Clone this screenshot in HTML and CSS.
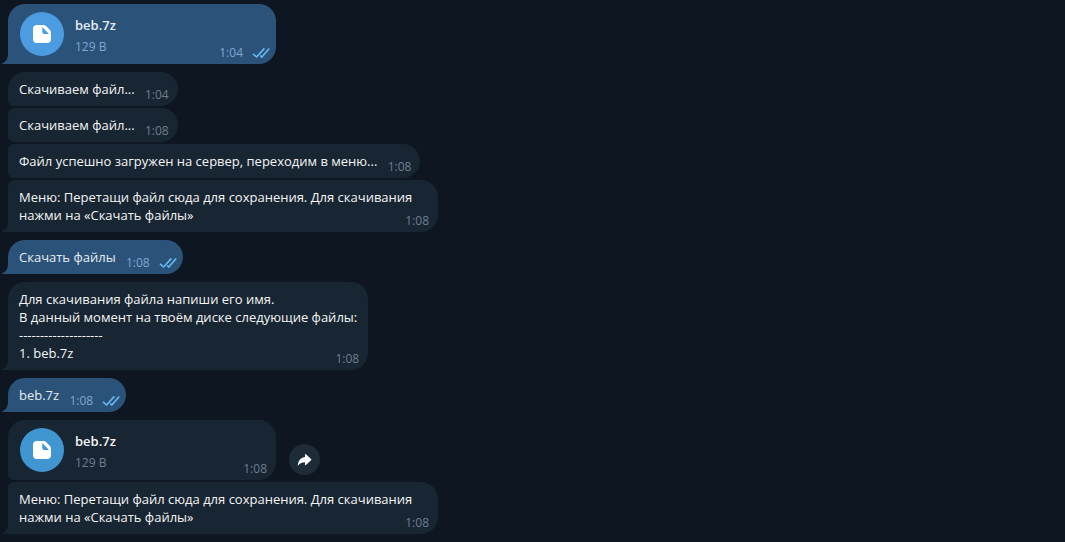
FILE: index.html
```
<!DOCTYPE html>
<html lang="ru">
<head>
<meta charset="utf-8">
<meta name="viewport" content="width=device-width, initial-scale=1">
<title>Чат</title>
<link rel="stylesheet" href="styles.css">
</head>
<body>
<svg class="defs" aria-hidden="true">
  <symbol id="checks" viewBox="0 0 18 12"><path d="M1 6.800 4.600 10 12.400 1.400M8.200 8.400 9.800 10 17.200 1.400" fill="none" stroke="currentColor" stroke-width="1.600"/></symbol>
  <symbol id="file" viewBox="0 0 18 18"><path fill-rule="evenodd" fill="#fff" d="M4 0H10.500Q12 0 13 1L17 5Q18 6 18 7.500V14Q18 18 14 18H4Q0 18 0 14V4Q0 0 4 0ZM9.300 2V7Q9.300 8.900 11.200 8.900H16Z"/></symbol>
  <symbol id="tail" viewBox="0 0 6 10"><path fill="currentColor" d="M6 0V10H0.500Q-.5 9.800 .5 9.300Q6 6.500 6 0Z"/></symbol>
</svg>
<main class="chat">
  <section class="group">
    <article class="bubble own file-bubble tailed">
      <svg class="tail"><use href="#tail"/></svg>
      <div class="file">
        <button class="file-button" aria-label="Открыть beb.7z"><svg class="file-icon"><use href="#file"/></svg></button>
        <div class="file-info"><div class="file-name">beb.7z</div><div class="file-size">129 B</div></div>
      </div>
      <span class="meta"><time>1:04</time><svg class="checks"><use href="#checks"/></svg></span>
    </article>
  </section>
  <section class="group">
    <article class="bubble short first"><p class="text">Скачиваем файл...</p><span class="meta"><time>1:04</time></span></article>
    <article class="bubble short"><p class="text">Скачиваем файл...</p><span class="meta"><time>1:08</time></span></article>
    <article class="bubble short"><p class="text">Файл успешно загружен на сервер, переходим в меню...</p><span class="meta"><time>1:08</time></span></article>
    <article class="bubble tailed">
      <svg class="tail"><use href="#tail"/></svg>
      <p class="text">Меню: Перетащи файл сюда для сохранения. Для скачивания нажми на «Скачать файлы»</p><span class="meta"><time>1:08</time></span>
    </article>
  </section>
  <section class="group">
    <article class="bubble own short first tailed">
      <svg class="tail"><use href="#tail"/></svg>
      <p class="text">Скачать файлы</p><span class="meta"><time>1:08</time><svg class="checks"><use href="#checks"/></svg></span>
    </article>
  </section>
  <section class="group">
    <article class="bubble first tailed">
      <svg class="tail"><use href="#tail"/></svg>
      <p class="text">Для скачивания файла напиши его имя.<br>В данный момент на твоём диске следующие файлы:<br>--------------------<br>1. beb.7z</p><span class="meta"><time>1:08</time></span>
    </article>
  </section>
  <section class="group">
    <article class="bubble own short first tailed">
      <svg class="tail"><use href="#tail"/></svg>
      <p class="text">beb.7z</p><span class="meta"><time>1:08</time><svg class="checks"><use href="#checks"/></svg></span>
    </article>
  </section>
  <section class="group">
    <div class="row">
      <article class="bubble file-bubble first">
        <div class="file">
          <button class="file-button" aria-label="Открыть beb.7z"><svg class="file-icon"><use href="#file"/></svg></button>
          <div class="file-info"><div class="file-name">beb.7z</div><div class="file-size">129 B</div></div>
        </div>
        <span class="meta"><time>1:08</time></span>
      </article>
      <button class="share" aria-label="Переслать"><svg viewBox="0 0 16 14"><path fill="#fff" d="M8.500 1.200Q8.500 0 9.500 .8L15 5.800Q15.800 6.500 15 7.200L9.500 12.200Q8.500 13 8.500 11.800V9.300Q4 9.300 1.300 12.700Q.6 13.300.8 12.300Q2 4.300 8.500 3.800Z"/></svg></button>
    </div>
    <article class="bubble tailed">
      <svg class="tail"><use href="#tail"/></svg>
      <p class="text">Меню: Перетащи файл сюда для сохранения. Для скачивания нажми на «Скачать файлы»</p><span class="meta"><time>1:08</time></span>
    </article>
  </section>
</main>
</body>
</html>
```
FILE: styles.css
```
* { box-sizing: border-box; }

body {
  margin: 0;
  background: #0e1621;
  color: #f5f5f5;
  font: 13px/18px "Open Sans", "Noto Sans", sans-serif;
}

.defs { position: absolute; width: 0; height: 0; }

.chat {
  display: flex;
  flex-direction: column;
  gap: 8px;
  padding: 4px 8px 8px;
}

.group {
  display: flex;
  flex-direction: column;
  align-items: flex-start;
  gap: 2px;
}

.bubble {
  position: relative;
  display: grid;
  max-width: 430px;
  padding: 8px 11px;
  border-radius: 6px 17px 17px 6px;
  background: #182533;
  color: #f5f5f5;
}

.bubble.first, .file-bubble { border-top-left-radius: 17px; }
.bubble.tailed { border-bottom-left-radius: 0; }
.bubble.own { background: #2b5278; color: #e4ecf2; }

.tail {
  position: absolute;
  right: 100%;
  bottom: 0;
  width: 6px;
  height: 10px;
  color: #182533;
}
.own .tail { color: #2b5278; }

.text, .file, .meta { grid-area: 1 / 1; }
.text { margin: 0; }
.short .text { padding-right: 32px; }
.short.own .text { padding-right: 56px; }

.meta {
  display: flex;
  align-items: center;
  align-self: end;
  justify-self: end;
  gap: 9px;
  margin: 0 -2px -5px 0;
  color: #6d7f8f;
  font-size: 12px;
  line-height: 16px;
}
.own .meta { margin-right: -5px; color: #7da8d3; }

.checks { width: 18px; height: 12px; color: #65b9f4; }

.file-bubble { width: 268px; }
.file {
  display: flex;
  align-items: center;
  gap: 11px;
  margin-left: 1px;
}
.file-button {
  display: grid;
  place-items: center;
  width: 44px;
  height: 44px;
  padding: 0;
  border: 0;
  border-radius: 50%;
  background: #4096d1;
}
.own .file-button { background: #4c9ce2; }
.file-icon { width: 18px; height: 18px; }
.file-info { padding-top: 4px; }
.file-name { margin-bottom: 4px; font-weight: 600; }
.file-size { color: #6d7f8f; font-size: 12px; }
.own .file-size { color: #7da8d3; }

.row {
  display: flex;
  align-items: flex-end;
  gap: 13px;
}
.share {
  display: grid;
  place-items: center;
  width: 31px;
  height: 31px;
  margin-bottom: 5px;
  padding: 0;
  border: 0;
  border-radius: 50%;
  background: #1e2c3a;
}
.share svg { width: 15px; height: 14px; }
```
